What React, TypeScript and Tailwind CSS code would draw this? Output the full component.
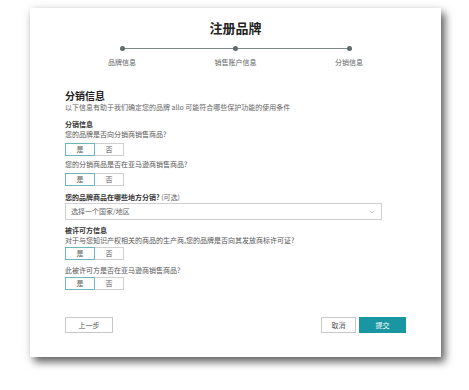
import { ChevronDown } from "lucide-react";

function YesNo() {
  return (
    <div className="flex h-[13px] w-[59px] text-[7px] leading-none text-[#555]">
      <div className="flex flex-1 items-center justify-center border border-[#6bb8bf] bg-white">是</div>
      <div className="flex flex-1 items-center justify-center border border-l-0 border-[#cfcfcf] bg-white">否</div>
    </div>
  );
}

export default function App() {
  const steps = ["品牌信息", "销售账户信息", "分销信息"];

  return (
    <div
      className="h-[390px] w-[469px] bg-white pl-[30px] pt-[8px]"
      style={{ fontFamily: '"Noto Sans CJK SC", "Noto Sans", sans-serif' }}
    >
      <div className="flex h-[349px] w-[411px] flex-col bg-white pt-[12px] shadow-[4px_5px_8px_rgba(0,0,0,0.6),0_0_10px_rgba(0,0,0,0.08)]">
        <h1 className="text-center text-[13px] font-bold leading-[16px] text-[#222]">注册品牌</h1>

        {/* stepper */}
        <div className="mx-auto mt-[10px] flex w-[232px] items-center">
          <span className="h-[5px] w-[5px] rounded-full bg-[#5f6b6b]" />
          <span className="h-[1.5px] flex-1 bg-[#7d8787]" />
          <span className="h-[5px] w-[5px] rounded-full bg-[#5f6b6b]" />
          <span className="h-[1.5px] flex-1 bg-[#7d8787]" />
          <span className="h-[5px] w-[5px] rounded-full bg-[#5f6b6b]" />
        </div>
        <div className="mx-auto mt-[6px] flex w-[307px] justify-between">
          {steps.map((s) => (
            <span key={s} className="w-[80px] text-center text-[7px] leading-[10px] text-[#666]">
              {s}
            </span>
          ))}
        </div>

        <div className="flex flex-col px-[35px] pt-[23px]">
          <h2 className="text-[10px] font-bold leading-[12px] text-[#222]">分销信息</h2>
          <p className="text-[7px] leading-[10px] text-[#666]">
            以下信息有助于我们确定您的品牌 allo 可能符合哪些保护功能的使用条件
          </p>

          <p className="mt-[7px] text-[7px] font-bold leading-[10px] text-[#333]">分销信息</p>
          <p className="text-[7px] leading-[10px] text-[#555]">您的品牌是否向分销商销售商品?</p>
          <div className="mt-[4px]">
            <YesNo />
          </div>

          <p className="mt-[3px] text-[7px] leading-[10px] text-[#555]">您的分销商品是否在亚马逊商销售商品?</p>
          <div className="mt-[4px]">
            <YesNo />
          </div>

          <p className="mt-[6px] text-[7px] leading-[10px] text-[#333]">
            <span className="font-bold">您的品牌商品在哪些地方分销?</span>
            <span className="text-[#666]"> (可选)</span>
          </p>
          <div className="mt-[1px] flex h-[17px] w-[317px] items-center justify-between border border-[#cfcfcf] pl-[5px] pr-[5px] text-[7px] text-[#666]">
            <span>选择一个国家/地区</span>
            <ChevronDown size={8} strokeWidth={1.5} className="text-[#999]" />
          </div>

          <p className="mt-[5px] text-[7px] font-bold leading-[10px] text-[#333]">被许可方信息</p>
          <p className="text-[7px] leading-[10px] text-[#555]">
            对于与您知识产权相关的商品的生产商,您的品牌是否向其发放商标许可证?
          </p>
          <div className="mt-[2px]">
            <YesNo />
          </div>

          <p className="mt-[5px] text-[7px] leading-[10px] text-[#555]">此被许可方是否在亚马逊商销售商品?</p>
          <div className="mt-[2px]">
            <YesNo />
          </div>

          <div className="mt-[27px] flex items-center justify-between">
            <button className="h-[16px] w-[48px] border border-[#c8c8c8] bg-white text-[7px] text-[#555]">上一步</button>
            <div className="flex gap-[3px]">
              <button className="h-[16px] w-[35px] border border-[#c8c8c8] bg-white text-[7px] text-[#555]">取消</button>
              <button className="h-[16px] w-[47px] bg-[#1a96a3] text-[7px] text-white">提交</button>
            </div>
          </div>
        </div>
      </div>
    </div>
  );
}
